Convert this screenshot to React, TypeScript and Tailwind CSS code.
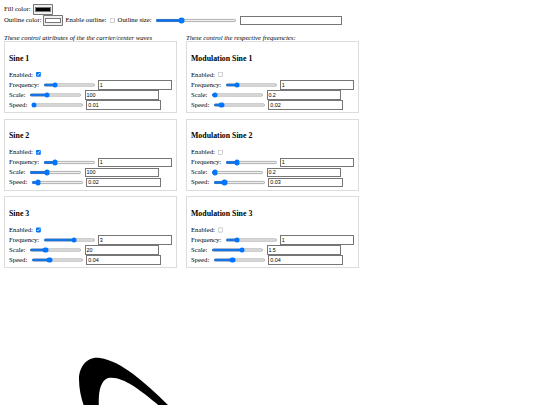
type Row = { label: string; value: string; pos: number };
type Wave = { title: string; enabled: boolean; rows: Row[] };

const inputText =
  "h-[24px] border border-[#767676] bg-white px-[2px] font-['Liberation_Sans',sans-serif] text-[13.5px] text-black";

const carriers: Wave[] = [
  {
    title: 'Sine 1',
    enabled: true,
    rows: [
      { label: 'Frequency:', value: '1', pos: 20 },
      { label: 'Scale:', value: '100', pos: 31 },
      { label: 'Speed:', value: '0.01', pos: 0 },
    ],
  },
  {
    title: 'Sine 2',
    enabled: true,
    rows: [
      { label: 'Frequency:', value: '1', pos: 20 },
      { label: 'Scale:', value: '100', pos: 31 },
      { label: 'Speed:', value: '0.02', pos: 9 },
    ],
  },
  {
    title: 'Sine 3',
    enabled: true,
    rows: [
      { label: 'Frequency:', value: '3', pos: 60 },
      { label: 'Scale:', value: '20', pos: 28 },
      { label: 'Speed:', value: '0.04', pos: 33 },
    ],
  },
];

const modulators: Wave[] = [
  {
    title: 'Modulation Sine 1',
    enabled: false,
    rows: [
      { label: 'Frequency:', value: '1', pos: 20 },
      { label: 'Scale:', value: '0.2', pos: 2 },
      { label: 'Speed:', value: '0.02', pos: 12 },
    ],
  },
  {
    title: 'Modulation Sine 2',
    enabled: false,
    rows: [
      { label: 'Frequency:', value: '1', pos: 20 },
      { label: 'Scale:', value: '0.2', pos: 2 },
      { label: 'Speed:', value: '0.03', pos: 18 },
    ],
  },
  {
    title: 'Modulation Sine 3',
    enabled: false,
    rows: [
      { label: 'Frequency:', value: '1', pos: 20 },
      { label: 'Scale:', value: '1.5', pos: 60 },
      { label: 'Speed:', value: '0.04', pos: 35 },
    ],
  },
];

function SliderRow({ row }: { row: Row }) {
  return (
    <div className="flex h-[25px] items-center">
      <span>{row.label}</span>
      <input type="range" min={0} max={100} defaultValue={row.pos} className="ml-[9px] w-[133px]" />
      <input type="text" defaultValue={row.value} className={`ml-[6px] w-[187px] ${inputText}`} />
    </div>
  );
}

function WaveBox({ wave }: { wave: Wave }) {
  return (
    <div className="mb-[14px] h-[180px] border border-[#dcdcdc] px-[10px] pt-[12px]">
      <h3 className="mt-[19px] mb-[17px] text-[19.6px] leading-[21px] font-bold">{wave.title}</h3>
      <div className="flex h-[25px] items-center">
        <span>Enabled:</span>
        <input type="checkbox" defaultChecked={wave.enabled} className="ml-[8px] size-[13px]" />
      </div>
      {wave.rows.map((row) => (
        <SliderRow key={row.label} row={row} />
      ))}
    </div>
  );
}

function Column({ note, waves }: { note: string; waves: Wave[] }) {
  return (
    <div className="w-[433px]">
      <p className="text-[16.8px] leading-[18px] italic">{note}</p>
      {waves.map((wave) => (
        <WaveBox key={wave.title} wave={wave} />
      ))}
    </div>
  );
}

export default function App() {
  return (
    <div className="h-[405px] overflow-hidden bg-white text-black">
      {/* page was laid out at full size, shown at 40% */}
      <div className="[zoom:0.4] px-[10px] pt-[10px] font-['Liberation_Serif',serif] text-[16.8px]">
        <div className="flex h-[27px] items-center">
          <span>Fill color:</span>
          <input
            type="color"
            defaultValue="#000000"
            className="ml-[5px] h-[26px] w-[50px] rounded-[2px] border border-[#767676] bg-[#efefef]"
          />
        </div>
        <div className="flex h-[28px] items-center">
          <span>Outline color:</span>
          <input
            type="color"
            defaultValue="#ffffff"
            className="ml-[4px] h-[26px] w-[50px] rounded-[2px] border border-[#767676] bg-[#efefef]"
          />
          <span className="ml-[6px]">Enable outline:</span>
          <input type="checkbox" className="ml-[9px] size-[13px]" />
          <span className="ml-[6px]">Outline size:</span>
          <input type="range" min={0} max={100} defaultValue={31} className="ml-[8px] w-[205px]" />
          <input type="text" className={`ml-[8px] w-[255px] ${inputText}`} />
        </div>

        <div className="mt-[20px] flex gap-[22px]">
          <Column note="These control attributes of the the carrier/center waves" waves={carriers} />
          <Column note="These control the respective frequencies:" waves={modulators} />
        </div>
      </div>

      {/* canvas output */}
      <svg width="540" height="135" viewBox="0 0 540 135" className="block">
        <path
          d="M 172 135 C 148 111, 122 87, 100 84 C 87 82, 79 93, 79 105 C 79 117, 82 127, 85 135 L 99 135 C 98 119, 100 107, 108 104 C 122 101, 142 117, 163 135 Z"
          fill="#000"
        />
      </svg>
    </div>
  );
}
